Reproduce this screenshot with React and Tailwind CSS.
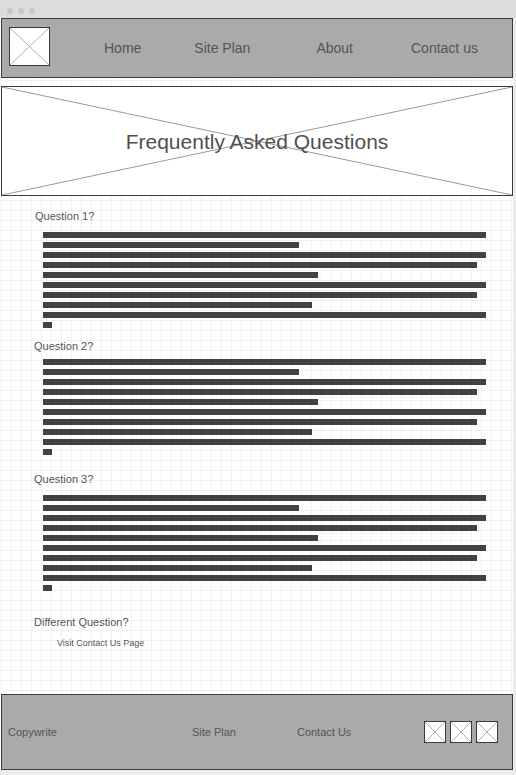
import React from "react";

const XBox = ({ className }) => (
  <div className={"relative bg-white border border-[#3a3a3a] " + className}>
    <svg className="absolute inset-0 w-full h-full" preserveAspectRatio="none" viewBox="0 0 100 100">
      <line x1="0" y1="0" x2="100" y2="100" stroke="#b0b0b0" strokeWidth="1" vectorEffect="non-scaling-stroke" />
      <line x1="100" y1="0" x2="0" y2="100" stroke="#b0b0b0" strokeWidth="1" vectorEffect="non-scaling-stroke" />
    </svg>
  </div>
);

const widths = [443, 256, 443, 434, 275, 443, 434, 269, 443, 9];

const Bars = ({ className }) => (
  <div className={"flex flex-col gap-[4px] ml-[42px] " + className}>
    {widths.map((w, i) => (
      <div key={i} className="h-[6px] bg-[#424242]" style={{ width: w }} />
    ))}
  </div>
);

export default function App() {
  return (
    <div
      className="w-[516px] h-[775px] flex flex-col bg-[#ececec] overflow-hidden"
      style={{ fontFamily: '"Liberation Sans", Arial, sans-serif' }}
    >
      <div className="h-[18px] shrink-0 bg-[#dcdcdc] flex items-center gap-[5px] pl-[7px] pt-[3px]">
        <div className="w-[6px] h-[6px] rounded-full bg-[#c8c8c8]" />
        <div className="w-[6px] h-[6px] rounded-full bg-[#c8c8c8]" />
        <div className="w-[6px] h-[6px] rounded-full bg-[#c8c8c8]" />
      </div>
      <div className="w-[513px] h-[757px] shrink-0 bg-white bg-[linear-gradient(to_right,#f1f1f1_1px,transparent_1px),linear-gradient(to_bottom,#f1f1f1_1px,transparent_1px)] bg-[size:10px_10px] bg-[position:1px_2px] pl-[1px] flex flex-col">
        {/* header */}
        <div className="h-[60px] w-[512px] shrink-0 bg-[#aaaaaa] border border-[#3c3c3c] flex items-center text-[14px] text-[#555555]">
          <XBox className="w-[41px] h-[39px] ml-[7px] -mt-[3px]" />
          <span className="ml-[54px]">Home</span>
          <span className="ml-[53px]">Site Plan</span>
          <span className="ml-[66px]">About</span>
          <span className="ml-[58px]">Contact us</span>
        </div>
        {/* hero */}
        <div className="relative mt-[8px] h-[110px] w-[512px] shrink-0 bg-white border border-[#3c3c3c] flex items-center justify-center">
          <svg className="absolute inset-0 w-full h-full" preserveAspectRatio="none" viewBox="0 0 100 100">
            <line x1="0" y1="100" x2="100" y2="0" stroke="#9a9a9a" strokeWidth="1" vectorEffect="non-scaling-stroke" />
            <line x1="0" y1="0" x2="100" y2="100" stroke="#9a9a9a" strokeWidth="1" vectorEffect="non-scaling-stroke" />
          </svg>
          <span className="relative text-[21px] text-[#4f4f4f] mt-[2px]">Frequently Asked Questions</span>
        </div>
        {/* questions */}
        <div className="text-[11px] leading-[13px] text-[#555555] ml-[34px] mt-[14px]">Question 1?</div>
        <Bars className="mt-[9px]" />
        <div className="text-[11px] leading-[13px] text-[#555555] ml-[33px] mt-[12px]">Question 2?</div>
        <Bars className="mt-[6px]" />
        <div className="text-[11px] leading-[13px] text-[#555555] ml-[33px] mt-[18px]">Question 3?</div>
        <Bars className="mt-[9px]" />
        <div className="text-[11px] leading-[13px] text-[#555555] ml-[33px] mt-[25px]">Different Question?</div>
        <div className="text-[9px] leading-[11px] text-[#555555] ml-[56px] mt-[9px]">Visit Contact Us Page</div>
        <div className="flex-1" />
        {/* footer */}
        <div className="h-[76px] w-[512px] shrink-0 bg-[#aaaaaa] border border-[#3c3c3c] flex items-center text-[11px] text-[#555555]">
          <span className="ml-[6px]">Copywrite</span>
          <span className="ml-[135px]">Site Plan</span>
          <span className="ml-[61px]">Contact Us</span>
          <div className="ml-[73px] flex gap-[4px]">
            <XBox className="w-[22px] h-[22px]" />
            <XBox className="w-[22px] h-[22px]" />
            <XBox className="w-[22px] h-[22px]" />
          </div>
        </div>
        <div className="h-[5px] shrink-0 bg-[#ececec] -ml-[1px] w-[514px]" />
      </div>
    </div>
  );
}
